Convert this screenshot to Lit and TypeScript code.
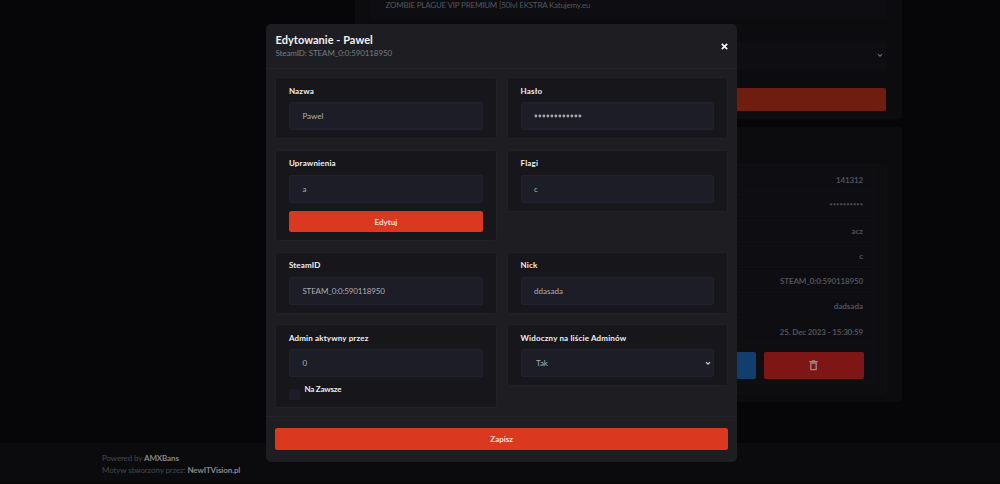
import { LitElement, html, css, svg } from "lit";
import { customElement, property } from "lit/decorators.js";

@customElement("form-card")
class FormCard extends LitElement {
  @property() label = "";
  static styles = css`
    :host {
      display: block;
      box-sizing: border-box;
      border: 1px solid #222226;
      border-radius: 3px;
      background: #17171b;
      padding: 6.4px 12.6px 7.8px 12.5px;
    }
    .label {
      height: 12px;
      line-height: 12px;
      font-weight: 700;
      letter-spacing: 0.16px;
      color: #f0f0f2;
      margin-bottom: 5.5px;
      white-space: nowrap;
    }
  `;
  render() {
    return html`<div class="label">${this.label}</div><slot></slot>`;
  }
}

@customElement("app-root")
class AppRoot extends LitElement {
  static styles = css`
    :host {
      display: block;
      position: relative;
      width: 1000px;
      height: 484px;
      overflow: hidden;
      background: #060608;
      font-family: Lato, "Open Sans", sans-serif;
      font-size: 8px;
      letter-spacing: 0.1px;
      white-space: nowrap;
    }
    .page { display: flex; flex-direction: column; height: 484px; }
    .main { height: 443px; box-sizing: border-box; padding-left: 355px; width: 902px; }
    .panel { background: #0c0c0e; border-radius: 0 0 3px 3px; box-sizing: border-box; padding: 0 16px; }
    .top { height: 118.5px; }
    .bottom { height: 275.5px; margin-top: 8px; padding-top: 37px; border-radius: 3px; }
    .server {
      height: 19px; background: #0d0d12; color: #56565a; padding-left: 14.5px; line-height: 10px; box-sizing: border-box;
      letter-spacing: -0.2px;
    }
    .pick {
      margin-top: 22.5px; height: 28.5px; background: #0d0d12; display: flex; align-items: center;
      justify-content: flex-end; padding-right: 3px; border-radius: 2px;
    }
    .submit { margin-top: 18px; height: 22.5px; background: #6f1d10; border-radius: 2px; }
    .list {
      box-sizing: border-box; height: 230.5px; border: 1px solid #101012; border-radius: 3px; background: #0d0d0f;
      padding: 4.5px 10px; display: flex; flex-direction: column; gap: 2.3px;
    }
    .row {
      box-sizing: border-box; height: 23px; flex: none; border: 1px solid #101014; background: #0d0d12; color: #50535a;
      font-weight: 700; text-align: right; padding-right: 11px; line-height: 21.5px; letter-spacing: 0;
    }
    .row.num { letter-spacing: -0.15px; }
    .row.dots { letter-spacing: -0.03px; line-height: 23px; color: #5c5e65; }
    .actions {
      box-sizing: border-box; height: 38px; flex: none; border: 1px solid #101014; background: #0d0d12;
      padding: 4.5px 10px 0 0; display: flex; justify-content: flex-end; gap: 7.5px;
    }
    .act { width: 100.5px; height: 27.5px; border-radius: 2px; display: flex; align-items: center; justify-content: center; }
    .blue { background: #113e6c; }
    .red { background: #7f1616; }
    .footer {
      height: 41px; box-sizing: border-box; background: #0b0b0d; border-bottom: 1px solid #050506;
      padding: 10px 0 0 102px; color: #45474d; line-height: 11.5px; letter-spacing: -0.12px;
    }
    .footer b { color: #868689; }
    .powered { letter-spacing: -0.13px; }
    .modal {
      position: absolute; left: 266px; top: 23.5px; width: 471px; height: 438px; box-sizing: border-box;
      border-radius: 5px; background: #1e1e22; overflow: hidden;
    }
    .head {
      display: flex; justify-content: space-between; align-items: center; height: 45px; box-sizing: border-box;
      border-bottom: 1px solid #242428; padding: 0 9px 0 9.5px;
    }
    .close { margin-top: 2px; }
    .title { font-size: 11px; line-height: 14px; font-weight: 700; color: #f2f2f3; letter-spacing: 0.04px; }
    .sub { color: #727b84; line-height: 12px; letter-spacing: -0.1px; }
    .body {
      display: grid; grid-template-columns: 221.3px 220.9px; grid-template-rows: 61.6px 91px 61.5px 82.7px;
      column-gap: 10.4px; row-gap: 11px; padding: 8.8px 9px 9.2px 9.4px; align-items: start;
    }
    .input {
      box-sizing: border-box; height: 28px; border: 1px solid #20212a; border-radius: 2px; background: #1c1d26;
      color: #adaeb3; padding: 0 13px 0 12.5px; display: flex; align-items: center; letter-spacing: 0;
    }
    .input.num { letter-spacing: -0.15px; }
    .select { justify-content: space-between; padding: 0 2px 0 14.5px; }
    .btn {
      display: flex; align-items: center; justify-content: center; height: 22px; border-radius: 2.5px;
      background: #da381f; color: #f8e0db; font-weight: 700; letter-spacing: 0;
    }
    .edit { margin-top: 8px; height: 21.5px; }
    .tall { min-height: 61.5px; }
    .check {
      display: flex; gap: 4.5px; height: 22px; color: #eaeaec; font-weight: 700; line-height: 12px; padding-top: 6px;
      box-sizing: border-box; letter-spacing: -0.2px;
    }
    .box { width: 11px; height: 11px; margin-top: 6px; border-radius: 2px; background: #1c1d26; flex: none; }
    .foot { border-top: 1px solid #242428; padding: 11px 9px 0 9.4px; }
    svg { display: block; }
  `;

  chevron(color: string) {
    return html`<svg width="6" height="5" viewBox="0 0 6 5">${svg`<path d="M1 1.2 3 3.2 5 1.2" fill="none" stroke=${color} stroke-width="1.2"/>`}</svg>`;
  }

  render() {
    const rows = [
      ["141312", "num"],
      ["**********", "dots"],
      ["acz", ""],
      ["c", ""],
      ["STEAM_0:0:590118950", "num"],
      ["dadsada", ""],
      ["25. Dec 2023 - 15:30:59", "num"],
    ];
    return html`
      <div class="page">
        <div class="main">
          <div class="panel top">
            <div class="server">ZOMBIE PLAGUE VIP PREMIUM [50lvl EKSTRA Katujemy.eu</div>
            <div class="pick">${this.chevron("#68686c")}</div>
            <div class="submit"></div>
          </div>
          <div class="panel bottom">
            <div class="list">
              ${rows.map(([text, kind]) => html`<div class="row ${kind}">${text}</div>`)}
              <div class="actions">
                <div class="act blue"></div>
                <div class="act red">
                  <svg width="9" height="11" viewBox="0 0 9 11">
                    <path d="M.3 1.7H8.7M2.9 .9H6.1M1.8 3.2H7.2V9.7H1.8Z" fill="none" stroke="#9c8988" stroke-width="1.3" />
                  </svg>
                </div>
              </div>
            </div>
          </div>
        </div>
        <div class="footer">
          <div class="powered">Powered by <b>AMXBans</b></div>
          <div class="theme">Motyw stworzony przez: <b>NewITVision.pl</b></div>
        </div>
      </div>
      <div class="modal">
        <div class="head">
          <div>
            <div class="title">Edytowanie - Pawel</div>
            <div class="sub">SteamID: STEAM_0:0:590118950</div>
          </div>
          <svg class="close" width="7" height="7" viewBox="0 0 7 7"><path d="M.8.8 6.2 6.2M6.2.8.8 6.2" stroke="#f4f4f4" stroke-width="1.7" /></svg>
        </div>
        <div class="body">
          <form-card label="Nazwa"><div class="input">Pawel</div></form-card>
          <form-card label="Hasło"><div class="input"><svg width="48" height="4" viewBox="0 0 48 4">
            ${Array.from({ length: 12 }, (_, i) => svg`<circle cx=${1.9 + i * 4} cy="2" r="1.4" fill="#a9aaae"/>`)}
          </svg></div></form-card>
          <form-card label="Uprawnienia"><div class="input">a</div><div class="btn edit">Edytuj</div></form-card>
          <form-card label="Flagi"><div class="input">c</div></form-card>
          <form-card class="tall" label="SteamID"><div class="input num">STEAM_0:0:590118950</div></form-card>
          <form-card class="tall" label="Nick"><div class="input">ddasada</div></form-card>
          <form-card label="Admin aktywny przez">
            <div class="input">0</div>
            <div class="check"><span class="box"></span><span>Na Zawsze</span></div>
          </form-card>
          <form-card label="Widoczny na liście Adminów">
            <div class="input select"><span>Tak</span>${this.chevron("#d0d0d4")}</div>
          </form-card>
        </div>
        <div class="foot"><div class="btn">Zapisz</div></div>
      </div>
    `;
  }
}
